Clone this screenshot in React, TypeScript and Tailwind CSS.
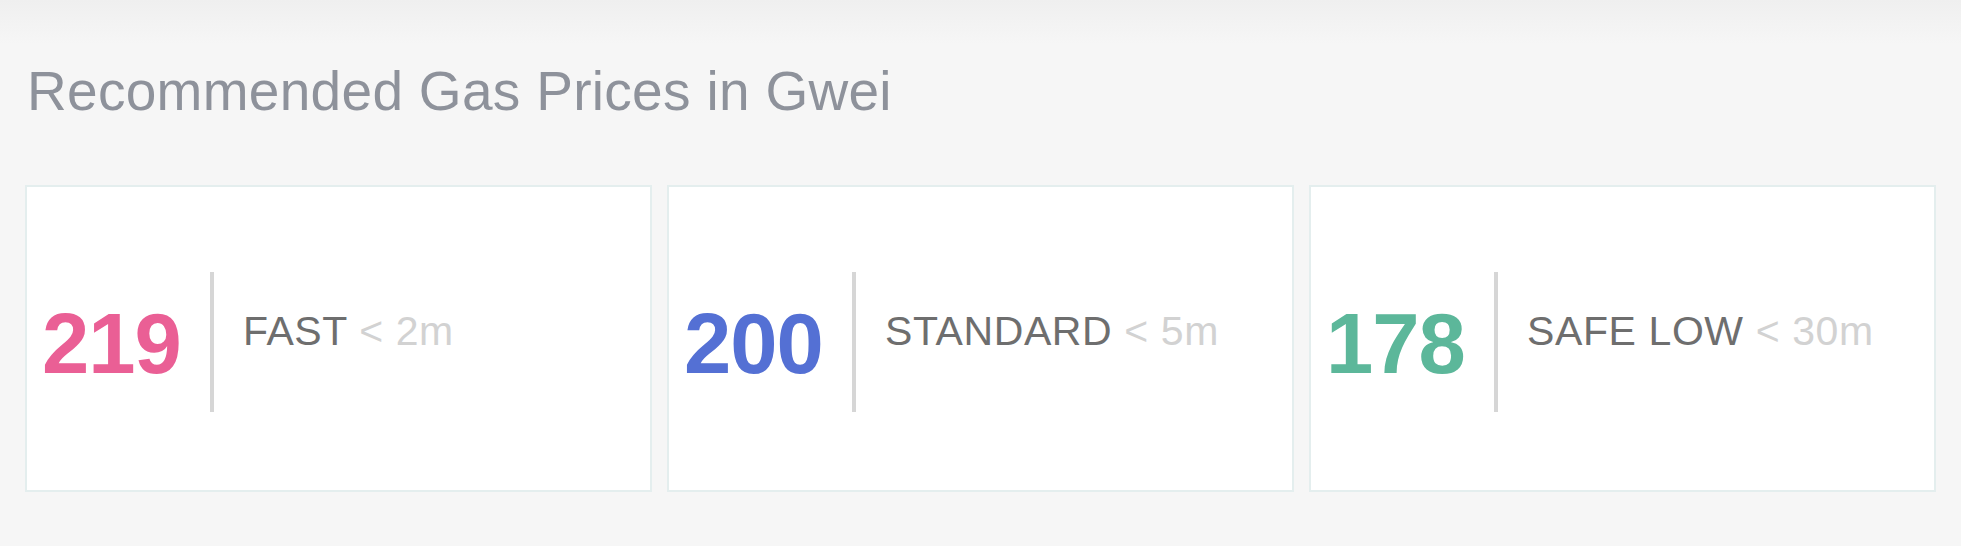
const prices = [
  { value: "219", label: "FAST", time: "< 2m", color: "text-[#ea5f95]" },
  { value: "200", label: "STANDARD", time: "< 5m", color: "text-[#5470d4]" },
  { value: "178", label: "SAFE LOW", time: "< 30m", color: "text-[#5cb79a]" },
];

export default function App() {
  return (
    <div className="w-[1961px] h-[546px] bg-[#f6f6f6] font-['Liberation_Sans',Arial,sans-serif] overflow-hidden">
      {/* faint shadow under the header above */}
      <div className="h-[44px] bg-gradient-to-b from-[#efefef] to-[#f6f6f6]" />

      <section className="pl-[25px] pr-[25px]">
        <h2 className="text-[55px] leading-none text-[#8e929b] pt-[20px] pl-[2px] tracking-[0.3px]">
          Recommended Gas Prices in Gwei
        </h2>

        <div className="grid grid-cols-3 gap-[15px] mt-[66px]">
          {prices.map((p) => (
            <div
              key={p.label}
              className="h-[307px] bg-white border-2 border-[#e4eeee] flex items-start pt-[85px] pl-[15px]"
            >
              <div className={`w-[150px] mt-[29px] text-[85px] font-bold leading-none tracking-[-1px] ${p.color}`}>
                {p.value}
              </div>
              <div className="w-[4px] h-[140px] bg-[#d6d6d6] ml-[18px]" />
              <div className="mt-[36px] ml-[29px] text-[41px] leading-[1.15] tracking-[0.6px]">
                <span className="text-[#6e6e6e]">{p.label}</span>{" "}
                <span className="text-[#d2d2d2]">{p.time}</span>
              </div>
            </div>
          ))}
        </div>
      </section>
    </div>
  );
}
